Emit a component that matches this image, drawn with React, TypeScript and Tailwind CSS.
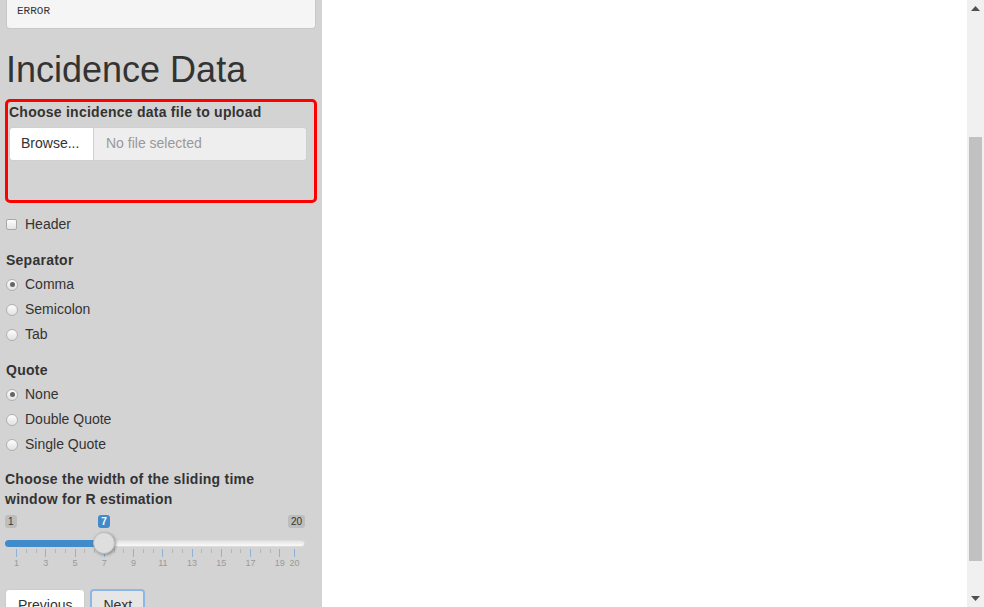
import React from "react";

const sepOptions = ["Comma", "Semicolon", "Tab"];
const quoteOptions = ["None", "Double Quote", "Single Quote"];

const tickX = (v: number) => 11 + ((v - 1) * 278) / 19;

const majors = [1, 3, 5, 7, 9, 11, 13, 15, 17, 19, 20];
const minors: number[] = [];
for (let v = 1; v < 19; v += 2) {
  minors.push(v + 2 / 3, v + 4 / 3);
}

const Radio = ({ checked }: { checked?: boolean }) => (
  <span className="w-[12px] h-[12px] rounded-full border border-[#b0b0b0] bg-gradient-to-b from-[#fdfdfd] to-[#e2e2e2] flex items-center justify-center shrink-0">
    {checked && <span className="w-[5px] h-[5px] rounded-full bg-[#666]" />}
  </span>
);

const RadioGroup = ({ label, options }: { label: string; options: string[] }) => (
  <div className="flex flex-col gap-[5px]">
    <div className="font-bold leading-[20px] tracking-[0.25px] pl-[1px]">{label}</div>
    {options.map((o, i) => (
      <div key={o} className="flex items-center h-[20px] gap-[7px] pl-[1px]">
        <Radio checked={i === 0} />
        <span>{o}</span>
      </div>
    ))}
  </div>
);

const Slider = () => (
  <div className="relative w-[300px] h-[60px] mt-[3px]">
    {/* min / value / max labels */}
    <div className="absolute left-0 top-[3px] h-[13px] px-[3px] rounded-[3px] bg-[#bdbdbd] text-[10px] leading-[13px] text-[#333]">
      1
    </div>
    <div className="absolute left-[93px] top-[3px] h-[13px] w-[12px] rounded-[3px] bg-[#428bca] text-[10px] leading-[13px] text-white text-center font-bold">
      7
    </div>
    <div className="absolute right-0 top-[3px] h-[13px] px-[3px] rounded-[3px] bg-[#bdbdbd] text-[10px] leading-[13px] text-[#333]">
      20
    </div>
    {/* track */}
    <div className="absolute left-0 right-0 top-[28px] h-[7px] rounded-full bg-gradient-to-b from-[#e4e4e4] to-[#fafafa] border border-[#dcdcdc]" />
    <div className="absolute left-0 w-[100px] top-[28px] h-[7px] rounded-l-full bg-[#428bca]" />
    {/* ticks */}
    {majors.map((v) => (
      <div
        key={`M${v}`}
        className="absolute top-[37px] h-[8px] w-px bg-[#8cb0d6]"
        style={{ left: tickX(v) }}
      />
    ))}
    {minors.map((v) => (
      <div
        key={`m${v}`}
        className="absolute top-[37px] h-[4px] w-px bg-[#b5b5b5]"
        style={{ left: tickX(v) }}
      />
    ))}
    {majors.map((v) => (
      <div
        key={`L${v}`}
        className="absolute top-[46px] w-[20px] -ml-[10px] text-center text-[9px] leading-[11px] text-[#9a9a9a]"
        style={{ left: tickX(v) + 0.5 }}
      >
        {v}
      </div>
    ))}
    {/* handle */}
    <div className="absolute left-[88px] top-[20px] w-[22px] h-[22px] rounded-full bg-[#dedede] border border-[#bdbdbd] shadow-[1px_1px_3px_rgba(0,0,0,0.35)]" />
  </div>
);

export default function App() {
  return (
    <div className="h-screen w-full overflow-hidden flex font-['Liberation_Sans',Arial,sans-serif] text-[14px] text-[#333]">
      {/* Sidebar */}
      <div className="w-[322px] shrink-0 bg-[#d3d3d3] px-[5px] flex flex-col">
        <div className="mx-px h-[29px] shrink-0 bg-[#f5f5f5] rounded-b-[4px] border border-t-0 border-[#c8c8c8] pl-[10px] pt-[3px] font-['Liberation_Mono',monospace] text-[11px] leading-[16px] text-[#333]">
          ERROR
        </div>

        <h1 className="mt-[21px] mb-[9px] text-[36px] leading-[1.1] font-normal pl-[1px]">
          Incidence Data
        </h1>

        {/* highlighted upload box */}
        <div className="border-[3px] border-[#ff0000] rounded-[5px] flex flex-col shrink-0">
          <div className="font-bold leading-[20px] tracking-[0.25px] pl-[1px] mb-[5px]">
            Choose incidence data file to upload
          </div>
          <div className="ml-[1px] w-[298px] h-[34px] flex rounded-[4px] border border-[#cfcfcf] overflow-hidden">
            <div className="w-[83px] bg-white flex items-center pl-[11px]">
              Browse...
            </div>
            <div className="flex-1 bg-[#eeeeee] border-l border-[#cfcfcf] flex items-center pl-[12px] text-[#999]">
              No file selected
            </div>
          </div>
          <div className="h-[39px]" />
        </div>

        <div className="mt-[12px] flex items-center h-[20px] gap-[8px] pl-[1px] shrink-0">
          <span className="w-[11px] h-[11px] rounded-[2px] border border-[#a8a8a8] bg-gradient-to-b from-[#fdfdfd] to-[#e4e4e4] shrink-0" />
          <span>Header</span>
        </div>

        <div className="mt-[15px] shrink-0">
          <RadioGroup label="Separator" options={sepOptions} />
        </div>
        <div className="mt-[15px] shrink-0">
          <RadioGroup label="Quote" options={quoteOptions} />
        </div>

        <div className="mt-[14px] font-bold leading-[20px] tracking-[0.25px] shrink-0">
          Choose the width of the sliding time
          <br />
          window for R estimation
        </div>
        <div className="shrink-0">
          <Slider />
        </div>

        <div className="mt-[17px] flex gap-[5px] shrink-0">
          <button className="h-[34px] px-[12px] bg-white border border-[#ccc] rounded-[4px] text-[#333]">
            Previous
          </button>
          <button className="h-[34px] px-[11px] bg-[#e6e6e6] border-2 border-[#8fb4e8] rounded-[4px] text-[#333]">
            Next
          </button>
        </div>
      </div>

      {/* Main panel */}
      <div className="flex-1 bg-white" />

      {/* Scrollbar */}
      <div className="w-[17px] shrink-0 bg-[#f0f0f0] flex flex-col items-center">
        <div className="h-[17px] flex items-center justify-center">
          <svg width="9" height="5" viewBox="0 0 9 5">
            <polygon points="4.5,0 9,5 0,5" fill="#505050" />
          </svg>
        </div>
        <div className="h-[120px]" />
        <div className="w-[13px] h-[424px] bg-[#c1c1c1]" />
        <div className="flex-1" />
        <div className="h-[17px] flex items-center justify-center">
          <svg width="9" height="5" viewBox="0 0 9 5">
            <polygon points="0,0 9,0 4.5,5" fill="#505050" />
          </svg>
        </div>
      </div>
    </div>
  );
}
